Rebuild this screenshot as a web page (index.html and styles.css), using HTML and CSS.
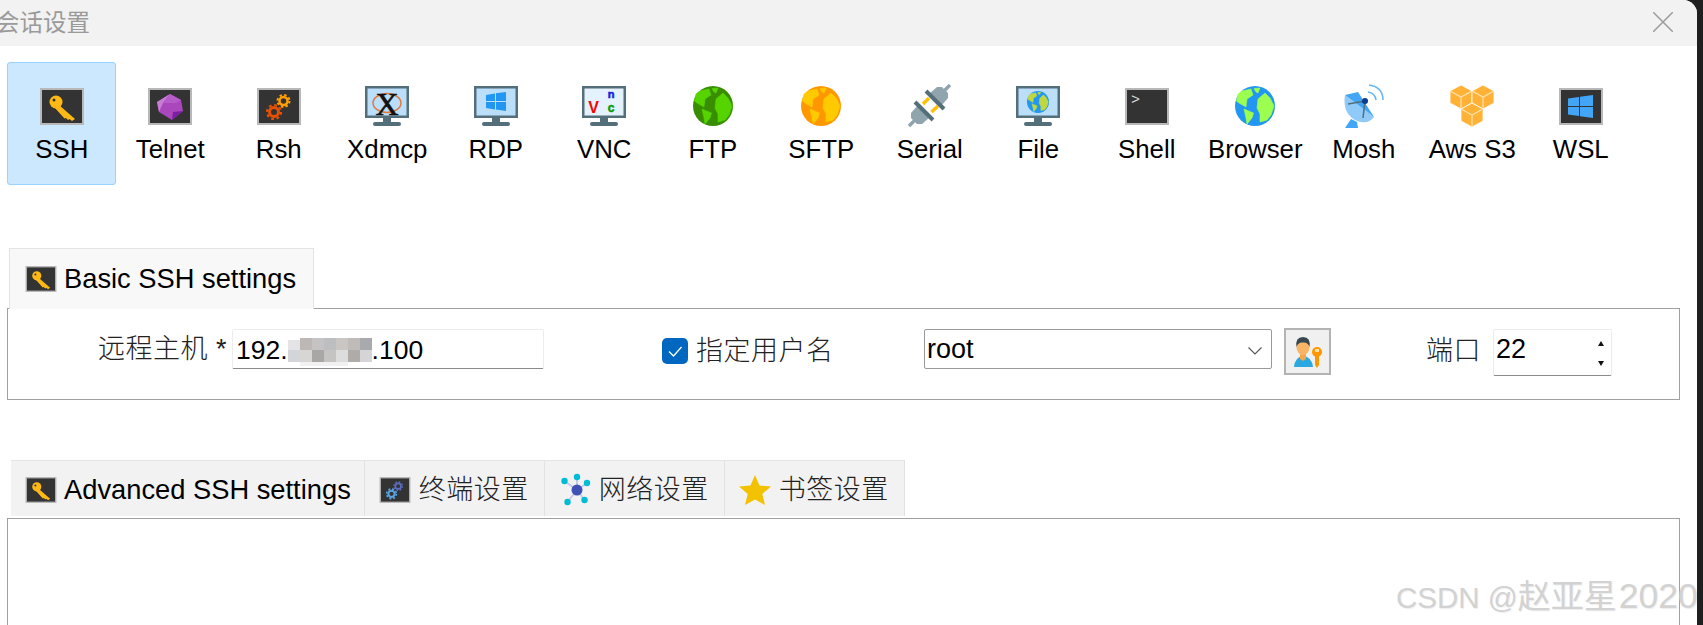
FILE: index.html
```html
<!DOCTYPE html>
<html lang="zh">
<head>
<meta charset="utf-8">
<title>会话设置</title>
<link rel="stylesheet" href="styles.css">
</head>
<body>
<svg class="defs" aria-hidden="true">
  <symbol id="tile" viewBox="0 0 44 37"><rect width="44" height="37" fill="#b8b8b8"/><rect x="2" y="2" width="40" height="33" fill="#333"/></symbol>
  <symbol id="key" viewBox="0 0 44 37">
    <path d="M19 17 L35 31 L32 33 L29.500 31 L28 32 L26 30 L24.500 30.500 L15 20Z" fill="#ffb915"/>
    <circle cx="16" cy="14" r="6.500" fill="#ffb915"/><circle cx="14" cy="12" r="1.500" fill="#333"/>
  </symbol>
  <symbol id="gears" viewBox="0 0 44 37">
    <g fill="none">
      <circle cx="26.500" cy="13" r="4" stroke="var(--g1)" stroke-width="2.500"/>
      <circle cx="26.500" cy="13" r="6" stroke="var(--g1)" stroke-width="2" stroke-dasharray="2.400 2.310"/>
      <circle cx="17" cy="24" r="4.500" stroke="var(--g2)" stroke-width="3"/>
      <circle cx="17" cy="24" r="7" stroke="var(--g2)" stroke-width="2.200" stroke-dasharray="2.800 2.700"/>
    </g>
  </symbol>
  <symbol id="monitor" viewBox="0 0 44 40">
    <rect width="44" height="32" fill="#546e7a"/>
    <rect x="2.500" y="2.500" width="39" height="27" fill="var(--screen)"/>
    <rect x="18" y="32" width="8" height="4" fill="#546e7a"/>
    <rect x="8" y="36" width="28" height="4" rx="2" fill="#546e7a"/>
  </symbol>
  <symbol id="globe" viewBox="0 0 40 40">
    <circle cx="20" cy="20" r="20" fill="var(--sea)"/>
    <g fill="var(--land)" stroke="var(--land)" stroke-linejoin="round" stroke-width="0.600">
      <path d="M30 7 L35 12 L39 20 L36 29 L32 34 L25 36 L25 28 L22 22 L23 13Z"/>
      <path d="M7 5 L16 3 L18 9 L12 13 L11 21 L4 17 L1.500 15 L3 8Z"/>
      <path d="M9 23 L18.500 27 L17 32 L12 38 L11 32Z"/>
      <path d="M19 2.500 L25 2 L23 7 L21 6Z"/>
    </g>
  </symbol>
  <g id="cube">
    <path d="M11 0 L22 6 V18 L11 24 L0 18 V6Z" fill="#ffb236" stroke="#fff" stroke-width="0.800"/>
    <path d="M1 6.500 L11 12 L21 6.500 M11 12 V23" fill="none" stroke="#ffe3b0" stroke-width="1.200"/>
  </g>
</svg>

<div class="dialog">
  <header class="titlebar">
    <span class="title">会话设置</span>
    <svg class="close" viewBox="0 0 20 20"><path d="M0 0 L20 20 M20 0 L0 20" stroke="#9c9c9c" stroke-width="1.500"/></svg>
  </header>

  <nav class="toolbar">
    <div class="tool active"><div class="slot"><svg class="i-tile"><use href="#tile"/><use href="#key"/></svg></div><span>SSH</span></div>
    <div class="tool"><div class="slot"><svg class="i-tile" viewBox="0 0 44 37"><use href="#tile" width="44" height="37"/>
      <path d="M22 6 L33 12 L35 23 L24 32 L11 24 L9 14Z" fill="#ab47bc"/>
      <path d="M22 6 L9 14 L11 24 L15 15Z" fill="#c77dd6"/>
      <path d="M35 23 L24 32 L25 24Z" fill="#7b1fa2"/>
      <path d="M22 6 L33 12 L28 15 L15 15Z" fill="#b65cc8"/></svg></div><span>Telnet</span></div>
    <div class="tool warm"><div class="slot"><svg class="i-tile"><use href="#tile"/><use href="#gears"/></svg></div><span>Rsh</span></div>
    <div class="tool"><div class="slot"><svg class="i-mon" viewBox="0 0 44 40"><use href="#monitor" width="44" height="40"/>
      <ellipse cx="22" cy="17" rx="14" ry="9.500" fill="none" stroke="#e0793a" stroke-width="1.500"/>
      <text class="x-logo" x="22" y="29" text-anchor="middle">X</text></svg></div><span>Xdmcp</span></div>
    <div class="tool"><div class="slot"><svg class="i-mon" viewBox="0 0 44 40"><use href="#monitor" width="44" height="40"/>
      <path d="M12 9 L21 7.500 V15 H12Z M22 7.300 L32 6 V15 H22Z M12 16 H21 V23.500 L12 22Z M22 16 H32 V25 L22 23.600Z" fill="#2196f3"/></svg></div><span>RDP</span></div>
    <div class="tool pale"><div class="slot"><svg class="i-mon" viewBox="0 0 44 40"><use href="#monitor" width="44" height="40"/>
      <text class="v-v" x="11.500" y="26.500" text-anchor="middle">V</text>
      <text class="v-n" x="29" y="12" text-anchor="middle">n</text>
      <text class="v-c" x="29" y="26" text-anchor="middle">c</text></svg></div><span>VNC</span></div>
    <div class="tool ftp"><div class="slot"><svg class="i-globe"><use href="#globe"/></svg></div><span>FTP</span></div>
    <div class="tool sftp"><div class="slot"><svg class="i-globe"><use href="#globe"/></svg></div><span>SFTP</span></div>
    <div class="tool"><div class="slot"><svg class="i-serial" viewBox="0 0 44 44">
      <path d="M21 14 L15 20 M30 22 L23.500 28" stroke="#ffc107" stroke-width="3.500"/>
      <path d="M21 10 L29 3 L34 3 L40 9 L40 14 L33 22Z M22 33 L14 40 L9 40 L3 34 L3 29 L10 21Z" fill="#90a4ae"/>
      <path d="M35 8 L42 1 M8 35 L1 42" stroke="#90a4ae" stroke-width="3.500"/>
      <path d="M18 7 L36 25 M7 18 L25 36" stroke="#546e7a" stroke-width="4"/></svg></div><span>Serial</span></div>
    <div class="tool file"><div class="slot"><svg class="i-mon" viewBox="0 0 44 40"><use href="#monitor" width="44" height="40"/><use href="#globe" x="11" y="5" width="22" height="22"/></svg></div><span>File</span></div>
    <div class="tool"><div class="slot"><svg class="i-tile" viewBox="0 0 44 37"><use href="#tile" width="44" height="37"/><text class="prompt" x="6" y="16">&gt;</text></svg></div><span>Shell</span></div>
    <div class="tool browser"><div class="slot"><svg class="i-globe"><use href="#globe"/></svg></div><span>Browser</span></div>
    <div class="tool"><div class="slot"><svg class="i-dish" viewBox="0 0 42 44">
      <path d="M2 44 L8 35 L14 38 L15 44Z" fill="#42a5f5"/>
      <path d="M2 11 Q-1 30 14 37 Q25 41 31 33Z" fill="#90caf9"/>
      <path d="M2 11 L15 8 L31 33Z" fill="#42a5f5"/>
      <path d="M22 17 L5 20 M22 17 L20 34" stroke="#546e7a" stroke-width="1.500"/>
      <circle cx="22" cy="17" r="3" fill="#0d3b8e"/>
      <path d="M25 8 Q32 9 33 16 M26 1 Q40 3 40 16" fill="none" stroke="#64b5f6" stroke-width="1.500"/></svg></div><span>Mosh</span></div>
    <div class="tool"><div class="slot"><svg class="i-aws" viewBox="0 0 44 42"><use href="#cube" x="0"/><use href="#cube" x="22"/><use href="#cube" x="11" y="18"/></svg></div><span>Aws S3</span></div>
    <div class="tool"><div class="slot"><svg class="i-tile" viewBox="0 0 44 37"><use href="#tile" width="44" height="37"/>
      <path d="M9 10.500 L20 9 V18 H9Z M21 8.800 L34 7 V18 H21Z M9 19 H20 V28 L9 26.500Z M21 19 H34 V30 L21 28.300Z" fill="#42a5f5"/></svg></div><span>WSL</span></div>
  </nav>

  <div class="tab-basic">
    <svg class="mini"><use href="#tile"/><use href="#key"/></svg>
    <span>Basic SSH settings</span>
  </div>
  <section class="panel panel-basic">
    <label class="host-label cjk">远程主机 *</label>
    <div class="field host">192.<svg class="mosaic" viewBox="0 0 84 28">
        <rect x="0" y="2" width="12" height="14" fill="#e4e4e6"/><rect x="12" y="0" width="12" height="12" fill="#bdb8b6"/><rect x="24" y="0" width="12" height="12" fill="#c5c3c3"/><rect x="36" y="0" width="12" height="12" fill="#bcbec0"/><rect x="48" y="0" width="12" height="12" fill="#c9c6c4"/><rect x="60" y="0" width="12" height="12" fill="#bfbbb9"/><rect x="72" y="0" width="12" height="12" fill="#a8aaae"/>
        <rect x="0" y="12" width="12" height="12" fill="#d4d5d8"/><rect x="12" y="12" width="12" height="12" fill="#d8d6d4"/><rect x="24" y="12" width="12" height="12" fill="#a9a7a5"/><rect x="36" y="12" width="12" height="12" fill="#c6c4c3"/><rect x="48" y="12" width="12" height="12" fill="#dedddd"/><rect x="60" y="12" width="12" height="12" fill="#aeaba8"/><rect x="72" y="12" width="12" height="12" fill="#d5d5d7"/>
        <rect x="12" y="24" width="48" height="4" fill="#f1f1f1"/></svg>.100</div>
    <span class="checkbox"><svg viewBox="0 0 26 26"><path d="M7 13.500 L11.500 18 L19.500 9" fill="none" stroke="#fff" stroke-width="1.300"/></svg></span>
    <label class="user-label cjk">指定用户名</label>
    <div class="combo"><span>root</span><svg class="chev" viewBox="0 0 14 8"><path d="M0.500 0.500 L7 7 L13.500 0.500" fill="none" stroke="#555" stroke-width="1.100"/></svg></div>
    <button class="userbtn" type="button"><svg viewBox="0 0 32 32">
      <path d="M2 31 Q3 21 11 20 Q20 21 21 31Z" fill="#29a9e0"/>
      <path d="M8 18 H14 V23 L11 25 L8 23Z" fill="#f5a54a"/>
      <ellipse cx="11" cy="11" rx="6.500" ry="8" fill="#f9b566"/>
      <path d="M4.500 11 Q3 1 11 1 Q19 1 17.500 11 Q16 6 11 6.500 Q6 6 4.500 11Z" fill="#37474f"/>
      <circle cx="25" cy="16" r="5" fill="#ff9800"/><rect x="23" y="13" width="4" height="3" fill="#ffe0a8"/>
      <path d="M23 19 H27 V29 L25 32 L23 29Z" fill="#ff9800"/></svg></button>
    <label class="port-label cjk">端口</label>
    <div class="spin"><span>22</span><div class="arrows"><i class="up"></i><i class="down"></i></div></div>
  </section>

  <div class="tabs">
    <div class="tab tab-first"><svg class="mini"><use href="#tile"/><use href="#key"/></svg><span>Advanced SSH settings</span></div>
    <div class="tab cool"><svg class="mini"><use href="#tile"/><use href="#gears"/></svg><span class="cjk">终端设置</span></div>
    <div class="tab"><svg class="net" viewBox="0 0 32 34">
      <path d="M18 17 L5.500 8 M18 17 V4 M18 17 L28 10 M18 17 L8.500 29 M18 17 L25.500 27" stroke="#c5cae9" stroke-width="2"/>
      <circle cx="18" cy="17" r="5.500" fill="#3f51b5"/>
      <circle cx="5.500" cy="8" r="3.200" fill="#00bcd4"/><circle cx="18" cy="4" r="3.200" fill="#00bcd4"/><circle cx="28" cy="10" r="3.200" fill="#00bcd4"/><circle cx="8.500" cy="29" r="3.200" fill="#00bcd4"/><circle cx="25.500" cy="27" r="3.200" fill="#00bcd4"/></svg><span class="cjk">网络设置</span></div>
    <div class="tab"><svg class="star" viewBox="0 0 32 30"><path d="M16 0 L20.500 10.500 L32 11.500 L23.300 19 L26 30 L16 24.500 L6 30 L8.700 19 L0 11.500 L11.500 10.500Z" fill="#f2c200"/></svg><span class="cjk">书签设置</span></div>
  </div>
  <section class="panel panel-adv"></section>

  <div class="watermark">CSDN @<span class="wm-cjk">赵亚星</span><span class="wm-num">2020</span></div>
</div>
</body>
</html>
```
FILE: styles.css
```css
* { box-sizing: border-box; }
html, body { margin: 0; padding: 0; height: 625px; overflow: hidden; background: #1f1f1f; }
body { font-family: "Liberation Sans", "Noto Sans CJK SC", sans-serif; color: #000; }
.defs { width: 0; height: 0; position: absolute; }

.dialog {
  position: relative;
  width: 1697px;
  height: 625px;
  background: #fff;
  border-top-right-radius: 14px;
  overflow: hidden;
  display: flex;
  flex-direction: column;
  align-items: flex-start;
}

.titlebar {
  flex: none;
  width: 100%;
  height: 46px;
  background: #f2f2f2;
  display: flex;
  align-items: center;
  justify-content: space-between;
  padding-right: 24px;
}
.title { margin: -4px 0 0 -4px; font-size: 23.500px; color: #9a9a9a; }
.close { width: 20px; height: 20px; margin-top: -2px; }

.toolbar {
  flex: none;
  margin: 16px 0 0 7px;
  display: grid;
  grid-template-columns: repeat(15, 108.500px);
  --screen: #bbdefb;
}
.tool {
  height: 123px;
  display: flex;
  flex-direction: column;
  align-items: center;
  padding: 21px 0 0 1px;
  font-size: 25.800px;
  line-height: 30px;
  border: 1px solid transparent;
  border-radius: 3px;
}
.tool span { margin-top: 6px; }
.tool.active { background: #cce8ff; border-color: #99d1ff; }
.slot { height: 44px; display: flex; align-items: center; justify-content: center; }
.i-tile { width: 44px; height: 37px; }
.i-mon { width: 44px; height: 40px; }
.i-globe { width: 40px; height: 40px; }
.i-serial { width: 44px; height: 44px; }
.i-dish { width: 42px; height: 44px; }
.i-aws { width: 44px; height: 42px; }

.warm { --g1: #ffa000; --g2: #e65100; }
.cool { --g1: #5c6bc0; --g2: #5aa5e6; }
.pale { --screen: #e3f2fd; }
.ftp { --sea: #388e00; --land: #55d400; }
.sftp { --sea: #ff9800; --land: #ffca00; }
.browser { --sea: #2196f3; --land: #9cff4f; }
.file { --sea: #2196f3; --land: #c0d840; }

.x-logo { font: 32px "Liberation Serif", serif; fill: #111; stroke: #111; stroke-width: 0.600px; }
.v-v { font: bold 16px "Liberation Sans", sans-serif; fill: #f00; }
.v-n { font: bold 11px "Liberation Sans", sans-serif; fill: #1020e0; stroke: #1020e0; stroke-width: 0.500px; }
.v-c { font: bold 12px "Liberation Sans", sans-serif; fill: #0a9a0a; stroke: #0a9a0a; stroke-width: 0.500px; }
.prompt { font: 15px "Liberation Mono", monospace; fill: #ddd; }

.tab-basic {
  flex: none;
  margin: 63px 0 -1px 9px;
  width: 305px;
  height: 61px;
  background: #f8f8f8;
  border: 1px solid #e4e4e4;
  border-bottom: 0;
  display: flex;
  align-items: center;
  padding: 0 0 0 15px;
  gap: 7px;
  font-size: 27.300px;
  z-index: 1;
}
.mini { width: 32px; height: 26px; flex: none; }
.mini use { width: 32px; height: 26px; }

.panel { flex: none; margin-left: 7px; width: 1673px; border: 1px solid #a0a0a0; }
.panel-basic {
  height: 92px;
  display: flex;
  align-items: flex-start;
  padding-top: 20px;
  font-size: 27px;
}
.cjk { font-size: 27px; line-height: 30px; letter-spacing: 0.500px; color: #222; font-weight: 300; white-space: nowrap; }
.host-label { margin: 5px 0 0 90px; width: 134px; flex: none; }
.field.host {
  width: 312px;
  height: 40px;
  line-height: 40px;
  font-size: 26.500px;
  padding-left: 3px;
  border: 1px solid #ececec;
  border-bottom: 1px solid #8a8a8a;
  border-radius: 2px;
  white-space: nowrap;
}
.mosaic { width: 84px; height: 28px; vertical-align: -7px; }
.checkbox {
  flex: none;
  width: 26px;
  height: 26px;
  margin: 9px 0 0 118px;
  border-radius: 5px;
  background: #0067c0;
  display: flex;
}
.checkbox svg { width: 26px; height: 26px; }
.user-label { margin: 7px 0 0 8px; width: 228px; flex: none; }
.combo {
  flex: none;
  width: 348px;
  height: 40px;
  border: 1px solid #999;
  border-radius: 2px;
  display: flex;
  align-items: center;
  justify-content: space-between;
  padding: 0 9px 0 2px;
}
.chev { width: 14px; height: 8px; margin-top: 3px; }
.userbtn {
  flex: none;
  width: 47px;
  height: 47px;
  margin: -1px 0 0 12px;
  padding: 0;
  background: #f0f0f0;
  border: 2px solid #b3b3b3;
  display: flex;
  align-items: center;
  justify-content: center;
}
.userbtn svg { width: 32px; height: 32px; }
.port-label { margin: 7px 0 0 95px; width: 67px; flex: none; }
.spin {
  flex: none;
  width: 119px;
  height: 47px;
  border: 1px solid #ececec;
  border-bottom: 1px solid #8a8a8a;
  border-radius: 2px;
  display: flex;
  justify-content: space-between;
  padding: 0 7px 0 2px;
  line-height: 38px;
}
.arrows { display: flex; flex-direction: column; justify-content: space-between; padding: 11px 0 9px; }
.arrows i { display: block; width: 0; height: 0; border-left: 3.500px solid transparent; border-right: 3.500px solid transparent; }
.arrows .up { border-bottom: 5px solid #111; }
.arrows .down { border-top: 5px solid #111; }

.tabs {
  flex: none;
  margin: 60px 0 0 11px;
  height: 56px;
  background: #f2f2f2;
  border-top: 1px solid #e4e4e4;
  display: flex;
}
.tab {
  display: flex;
  align-items: center;
  gap: 8px;
  padding: 2px 15px 0 14px;
  border-right: 1px solid #e2e2e2;
  font-size: 27.300px;
  white-space: nowrap;
}
.tab-first { gap: 7px; padding: 2px 13px 0 14px; }
.net { width: 32px; height: 34px; flex: none; }
.star { width: 32px; height: 30px; flex: none; }
.panel-adv { margin-top: 2px; height: 200px; }

.watermark {
  position: absolute;
  left: 1396px;
  top: 578px;
  font-size: 29.500px;
  line-height: 36px;
  color: #d2d2d2;
  text-shadow: 1px 1px 1px #eee;
  white-space: nowrap;
}
.wm-cjk { font-size: 33px; }
.wm-num { font-size: 35.500px; margin-left: 2px; }
```
